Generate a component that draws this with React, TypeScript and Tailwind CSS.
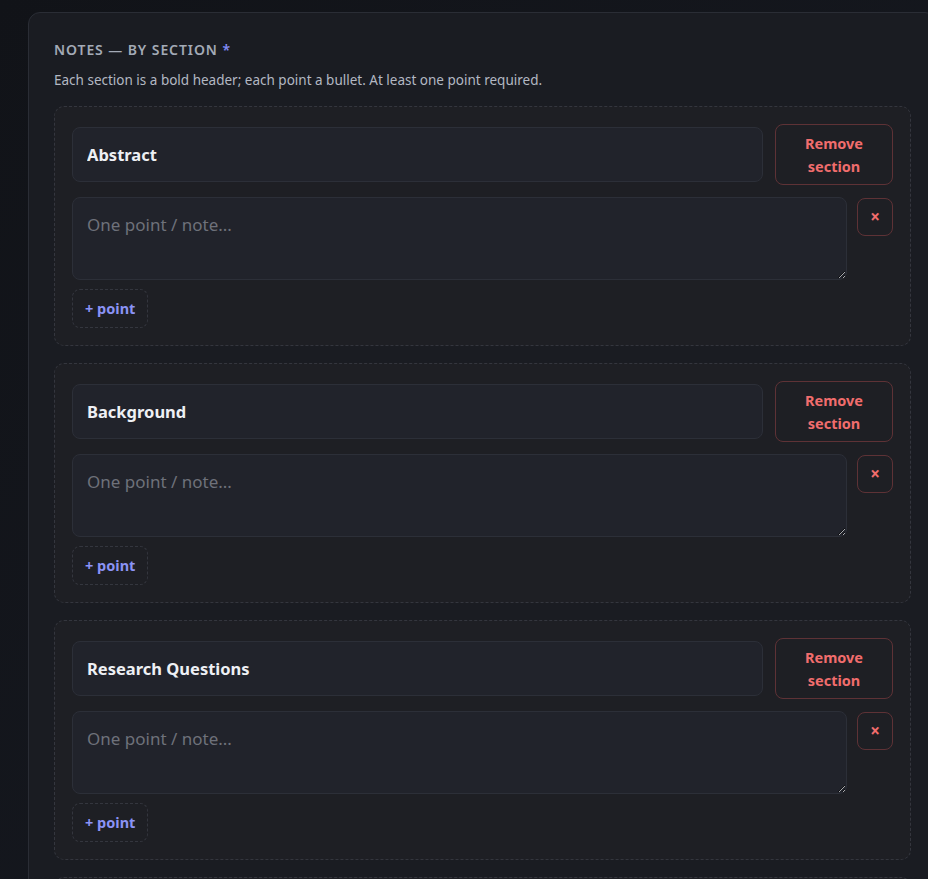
import React, { useState } from 'react';

type Section = { id: number; title: string; points: string[] };

const INITIAL: Section[] = [
  { id: 1, title: 'Abstract', points: [''] },
  { id: 2, title: 'Background', points: [''] },
  { id: 3, title: 'Research Questions', points: [''] },
  { id: 4, title: 'Methods', points: [''] },
];

const SectionCard: React.FC<{ section: Section }> = ({ section }) => (
  <div className="rounded-[10px] border border-dashed border-[#34363e] bg-[#1e1f24] p-[17px] flex flex-col">
    <div className="flex items-center gap-3">
      <input
        className="flex-1 h-[55px] rounded-[8px] border border-[#2c2f38] bg-[#21232b] px-[14px] text-[16.5px] font-bold text-[#eef0f4] outline-none"
        defaultValue={section.title}
      />
      <button className="w-[118px] h-[61px] rounded-[8px] border border-[#5e3236] text-[14.5px] font-bold leading-[23px] text-[#f16d6d]">
        Remove
        <br />
        section
      </button>
    </div>
    {section.points.map((p, i) => (
      <div key={i} className="flex items-start gap-[10px] mt-3">
        <textarea
          className="flex-1 h-[83px] rounded-[8px] border border-[#2c2f38] bg-[#21232b] px-[14px] py-[14px] text-[17px] text-[#eef0f4] placeholder:text-[#6e717a] outline-none"
          placeholder="One point / note..."
          defaultValue={p}
        />
        <button className="mt-px w-[36px] h-[38px] rounded-[8px] border border-[#5e3236] text-[17px] font-bold text-[#f16d6d] flex items-center justify-center">
          ×
        </button>
      </div>
    ))}
    <div className="mt-[9px]">
      <button className="h-[39px] px-[12px] rounded-[8px] border border-dashed border-[#34363e] text-[14.5px] font-bold text-[#8b93f5]">
        + point
      </button>
    </div>
  </div>
);

export default function App() {
  const [sections] = useState(INITIAL);

  return (
    <div
      className="w-[928px] h-[879px] overflow-hidden bg-gradient-to-br from-[#111318] to-[#171a22] pl-[28px] pt-[12px]"
      style={{ fontFamily: '"Noto Sans", "Open Sans", sans-serif' }}
    >
      <div className="w-[909px] rounded-[12px] border border-[#2a2d35] bg-[#1a1c22] pl-[25px] pr-[25px] pt-[28px] pb-8">
        <h2 className="text-[14px] font-semibold uppercase tracking-[0.065em] text-[#a3aab6] leading-[18px]">
          Notes — by section <span className="text-[#818cf8]">*</span>
        </h2>
        <p className="mt-[13px] text-[13.5px] text-[#b3b8c2] leading-[16px]">
          Each section is a bold header; each point a bullet. At least one point required.
        </p>
        <div className="mt-[18px] flex flex-col gap-[17px]">
          {sections.map((s) => (
            <SectionCard key={s.id} section={s} />
          ))}
        </div>
      </div>
    </div>
  );
}
